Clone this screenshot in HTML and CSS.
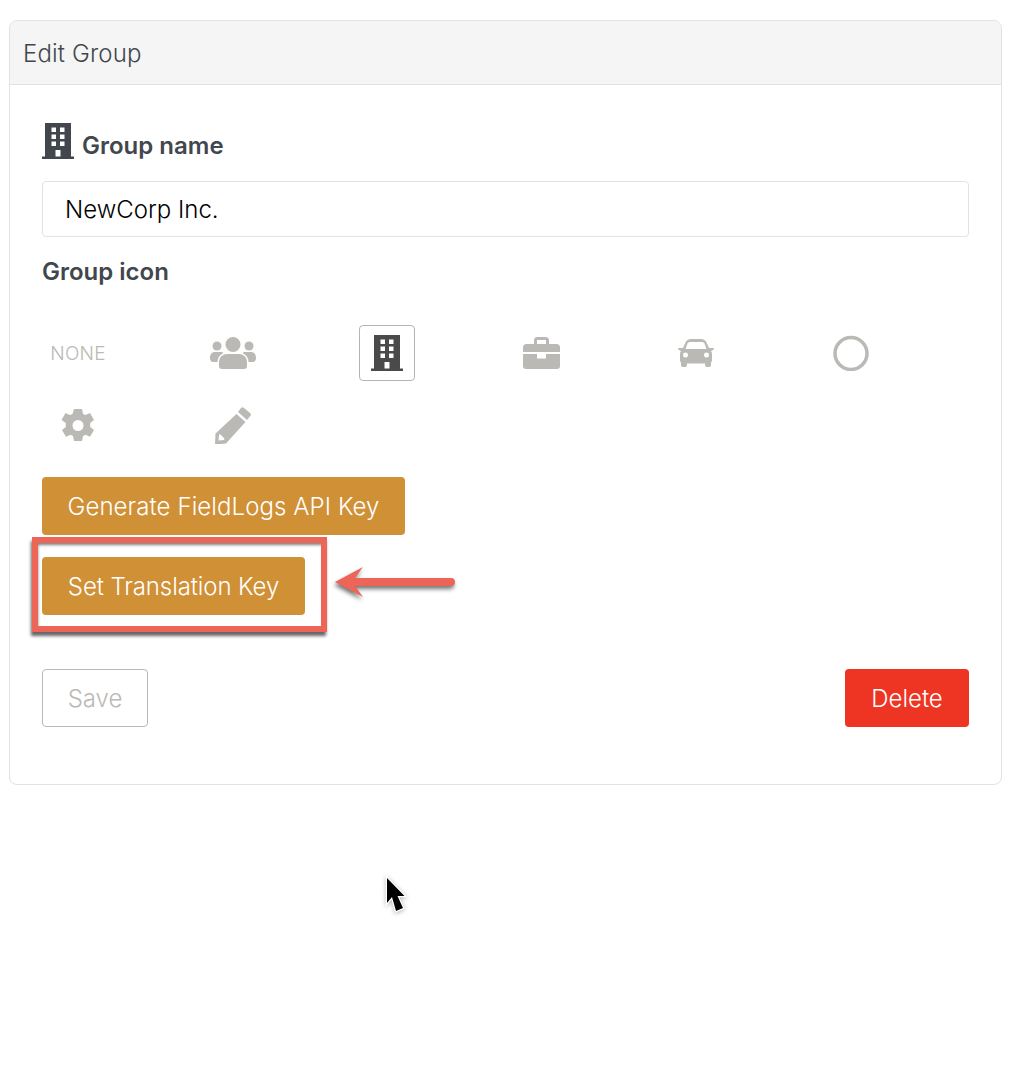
FILE: index.html
```html
<!DOCTYPE html>
<html lang="en">
<head>
<meta charset="utf-8">
<title>Edit Group</title>
<link rel="stylesheet" href="styles.css">
</head>
<body>
<svg class="defs" width="0" height="0" aria-hidden="true">
  <symbol id="building" viewBox="0 0 32 36">
    <path fill-rule="evenodd" d="M3 0H29V33.500H32V36H0V33.500H3ZM9.500 4.500V9H14V4.500ZM18 4.500V9H22.500V4.500ZM9.500 11.500V16H14V11.500ZM18 11.500V16H22.500V11.500ZM9.500 18.500V23H14V18.500ZM18 18.500V23H22.500V18.500ZM13.500 27V33.500H18.500V27Z"/>
  </symbol>
</svg>
<main class="card">
  <header class="card-head">Edit Group</header>
  <section class="card-body">
    <label class="name-label">
      <svg class="label-icon"><use href="#building"/></svg>
      <span>Group name</span>
    </label>
    <div class="input">NewCorp Inc.</div>
    <div class="icon-label">Group icon</div>
    <div class="icon-grid">
      <div class="icon-item none">NONE</div>
      <div class="icon-item">
        <svg width="46" height="32" viewBox="0 0 46 32"><circle cx="23" cy="7.500" r="7.500"/><circle cx="7" cy="9" r="4.500"/><circle cx="39" cy="9" r="4.500"/><path d="M12 32a3 3 0 0 1-3-3v-4c0-5 4-8 8-8h12c4 0 8 3 8 8v4a3 3 0 0 1-3 3Z"/><path d="M0 21c0-4 2-6 5-6h6c1 0 2 .5 2.500 1C9.500 18 7.500 21 7.500 25H3c-2 0-3-2-3-4Z"/><path d="M46 21c0-4-2-6-5-6h-6c-1 0-2 .5-2.500 1 4 2 6 5 6 9H43c2 0 3-2 3-4Z"/></svg>
      </div>
      <div class="icon-item selected">
        <svg width="32" height="36"><use href="#building"/></svg>
      </div>
      <div class="icon-item">
        <svg width="37" height="32" viewBox="0 0 37 32"><path fill-rule="evenodd" d="M11 7V3.500A3.500 3.500 0 0 1 14.500 0h8A3.500 3.500 0 0 1 26 3.500V7h7.500A3.500 3.500 0 0 1 37 10.500V15H0v-4.500A3.500 3.500 0 0 1 3.500 7ZM14 3v4h9V3Z"/><path d="M0 17h14v4.500h9V17h14v12a3 3 0 0 1-3 3H3a3 3 0 0 1-3-3Z"/></svg>
      </div>
      <div class="icon-item">
        <svg width="36" height="28" viewBox="0 0 36 28"><path fill-rule="evenodd" d="M5 9 7.500 3.500C8.500 1.200 10.500 0 13 0h10c2.500 0 4.500 1.200 5.500 3.500L31 9h4.500l.5 1.500-3 1.500c.7 1 1 2 1 3.500V21c0 1-.4 2-1 2.500V26a2 2 0 0 1-2 2h-2a2 2 0 0 1-2-2v-1.500H9V26a2 2 0 0 1-2 2H5a2 2 0 0 1-2-2v-2.500C2.400 23 2 22 2 21v-5.500c0-1.500.3-2.500 1-3.500L0 10.500.5 9ZM9.500 4.500 7.500 10h21l-2-5.500c-.4-1-1.500-1.500-3-1.500h-11c-1.500 0-2.600.5-3 1.500ZM7.500 13.500a2.500 2.500 0 1 0 0 5 2.500 2.500 0 0 0 0-5ZM28.500 13.500a2.500 2.500 0 1 0 0 5 2.500 2.500 0 0 0 0-5Z"/></svg>
      </div>
      <div class="icon-item">
        <svg width="36" height="36" viewBox="0 0 36 36"><circle class="ring" cx="18" cy="18.500" r="16"/></svg>
      </div>
      <div class="icon-item">
        <svg width="36" height="36" viewBox="0 0 36 36"><path fill-rule="evenodd" d="M14 0h8l1 5 2.500 1.100 4.500-2 4 6.800-3.800 3.100v3.900l3.800 3.100-4 6.800-4.500-2-2.500 1.100-1 5h-8l-1-5-2.500-1.100-4.500 2-4-6.800 3.800-3.100V14L1.500 10.900l4-6.800 4.500 2L12.500 5ZM18 11a5.500 5.500 0 1 0 0 11 5.500 5.500 0 0 0 0-11Z" transform="translate(0 2)"/></svg>
      </div>
      <div class="icon-item">
        <svg width="38" height="38" viewBox="0 0 38 38"><path fill-rule="evenodd" transform="translate(0 .5)" d="M27 1.500a2 2 0 0 1 3 0l6 5a2 2 0 0 1 .2 3L33 13.500 24 5.500ZM22.500 7.500l9 8L12 37 1 38l.5-11ZM5 28.500l-.5 5.500 5.500-.5.5-1.500-4.500-4.500Z"/></svg>
      </div>
    </div>
    <button class="btn gold generate" type="button">Generate FieldLogs API Key</button>
    <button class="btn gold translate" type="button">Set Translation Key</button>
    <div class="actions">
      <button class="btn save" type="button">Save</button>
      <button class="btn danger" type="button">Delete</button>
    </div>
  </section>
</main>
<div class="highlight"></div>
<svg class="arrow" width="130" height="46" viewBox="0 0 130 46">
  <path d="M119 18H23L31 7 3 22 31 37 23 26H119a4 4 0 0 0 0-8Z"/>
</svg>
<svg class="cursor" width="26" height="40" viewBox="0 0 26 40">
  <path class="cursor-edge" d="M3 2V27L8 21 12 35 19 32 13.500 20H20.500Z"/>
</svg>
</body>
</html>
```

FILE: styles.css
```css
* { box-sizing: border-box; }
html, body { margin: 0; background: #fff; }
body {
  position: relative;
  min-height: 1090px;
  padding: 20px 16px 0 9px;
  font-family: Inter, "Liberation Sans", sans-serif;
  font-size: 24px;
  font-weight: 300;
  color: #41474c;
}
.defs { position: absolute; }
.card {
  height: 765px;
  border: 1px solid #e2e2e2;
  border-radius: 8px;
  overflow: hidden;
}
.card-head {
  height: 64px;
  padding: 1px 13px 0;
  display: flex;
  align-items: center;
  background: #f5f5f5;
  border-bottom: 1px solid #e2e2e2;
  letter-spacing: .15px;
}
.card-body {
  padding: 37px 32px 0;
  display: flex;
  flex-direction: column;
  align-items: flex-start;
}
.name-label {
  display: flex;
  align-items: flex-end;
  gap: 8px;
  height: 37px;
  font-weight: 600;
  line-height: 26px;
  margin-bottom: 22px;
}
.label-icon { width: 32px; height: 36px; fill: #41474c; }
.input {
  width: 100%;
  height: 56px;
  padding: 0 22px;
  display: flex;
  align-items: center;
  border: 1px solid #e2e2e2;
  border-radius: 4px;
  color: #000;
}
.icon-label {
  margin-top: 19px;
  height: 32px;
  line-height: 32px;
  font-weight: 600;
}
.icon-grid {
  width: 100%;
  margin-top: 37px;
  display: grid;
  grid-template-columns: repeat(6, 1fr);
  row-gap: 16px;
  margin-bottom: 24px;
}
.icon-item {
  width: 56px;
  height: 56px;
  margin-left: 8px;
  display: flex;
  align-items: center;
  justify-content: center;
  fill: #bab9b5;
}
.icon-item.none { font-size: 19px; letter-spacing: .2px; color: #bab9b5; }
.icon-item.selected {
  border: 1px solid #b5b4b0;
  border-radius: 4px;
  fill: #4a4a4a;
}
.ring { fill: none; stroke: #bab9b5; stroke-width: 3.500; }
.btn {
  height: 58px;
  padding: 1px 0 0;
  border: 1px solid transparent;
  border-radius: 4px;
  font: inherit;
}
.gold { background: #d09035; color: #fff; margin-bottom: 22px; }
.generate { width: 363px; letter-spacing: .08px; }
.translate { width: 263px; letter-spacing: -.1px; }
.actions {
  width: 100%;
  margin-top: 32px;
  display: flex;
  justify-content: space-between;
}
.save { width: 106px; background: #fff; border-color: #bab9b5; color: #bab9b5; }
.danger { width: 124px; background: #ee3524; color: #fff; }
.highlight {
  position: absolute;
  left: 32px;
  top: 537px;
  width: 295px;
  height: 95px;
  border: 6px solid #ec6557;
  box-shadow: -1px 4px 3px rgba(0,0,0,.6), inset 1px 3px 3px -1px rgba(0,0,0,.5);
}
.arrow {
  position: absolute;
  left: 332px;
  top: 560px;
  fill: #ec6557;
  filter: drop-shadow(-1px 3px 2px rgba(0,0,0,.55));
}
.cursor {
  position: absolute;
  left: 384px;
  top: 876px;
  filter: drop-shadow(0 1px 2px rgba(0,0,0,.3));
}
.cursor-edge { fill: #000; stroke: #fff; stroke-width: 2.500; paint-order: stroke; }
```
